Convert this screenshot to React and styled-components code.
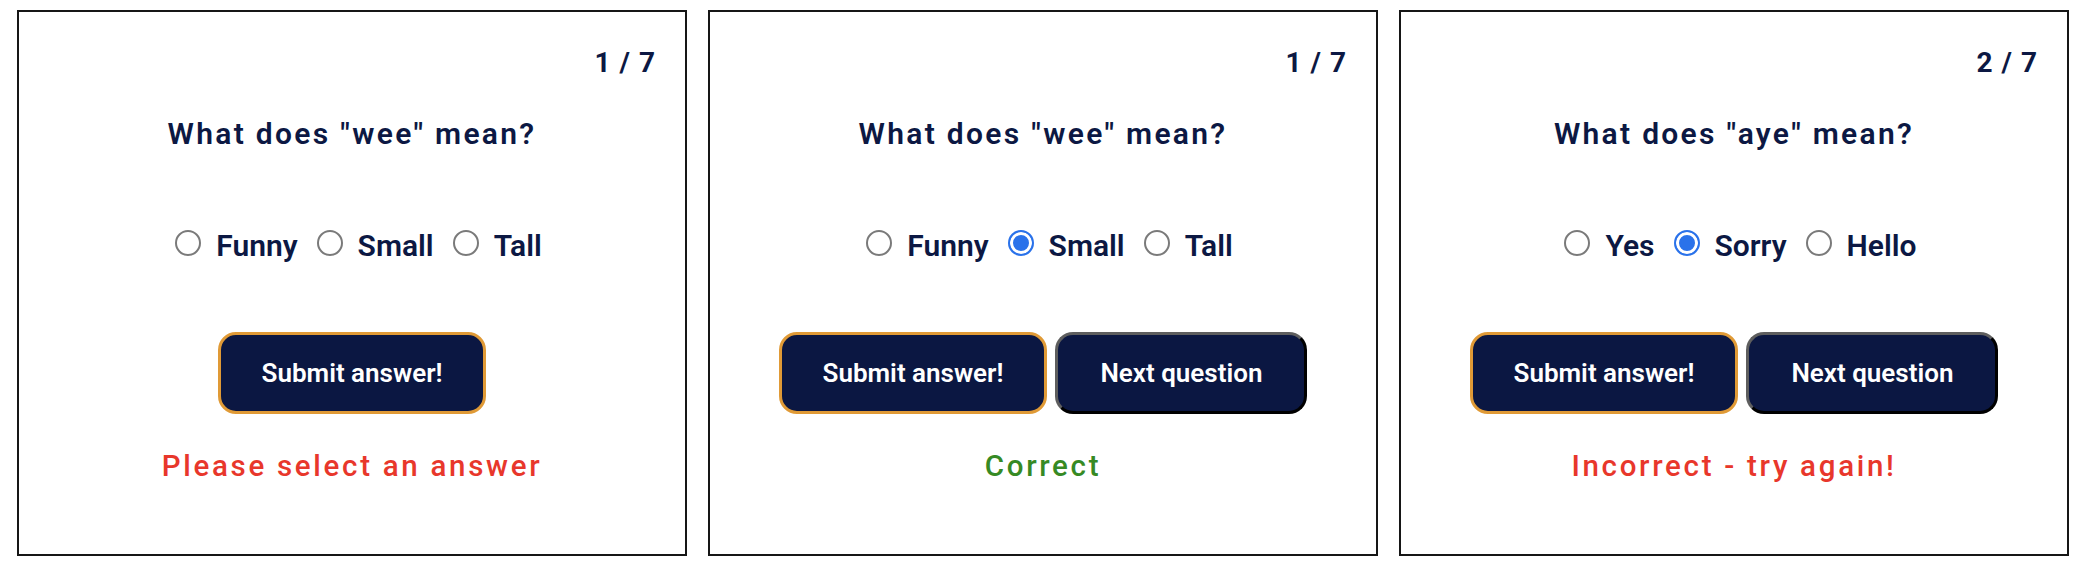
import React from 'react';
import styled, { createGlobalStyle } from 'styled-components';

const GlobalStyle = createGlobalStyle`
  html, body {
    margin: 0;
    padding: 0;
    background: #ffffff;
  }
  body {
    font-family: Roboto, "Liberation Sans", Arial, sans-serif;
  }
`;

const NAVY = '#0c1843';

const Page = styled.div`
  display: flex;
  gap: 21px;
  padding: 10px 0 0 17px;
`;

const Card = styled.div`
  box-sizing: border-box;
  width: 670px;
  height: 546px;
  border: 2px solid #161616;
  display: flex;
  flex-direction: column;
  align-items: center;
  padding-top: 37px;
`;

const Counter = styled.div`
  align-self: flex-end;
  margin-right: 29px;
  font-size: 28px;
  line-height: 1;
  font-weight: 700;
  letter-spacing: 1px;
  color: ${NAVY};
`;

const Question = styled.h2`
  margin: 42px 0 0;
  font-size: 30px;
  line-height: 1;
  font-weight: 600;
  letter-spacing: 2.3px;
  color: ${NAVY};
`;

const Options = styled.div`
  display: flex;
  align-items: center;
  margin-top: 81px;
  padding-left: 13px;
`;

const Option = styled.label`
  display: flex;
  align-items: center;
  gap: 15px;
  margin-right: 19px;
  font-size: 30px;
  line-height: 1;
  font-weight: 600;
  color: ${NAVY};

  &:last-child {
    margin-right: 0;
  }
`;

const Radio = styled.input`
  appearance: none;
  box-sizing: border-box;
  width: 26px;
  height: 26px;
  margin: 0 0 5px;
  border-radius: 50%;
  border: 2px solid #7a7a7a;
  background: #ffffff;

  &:checked {
    border-color: #2a72ea;
    background: #2a72ea;
    box-shadow: inset 0 0 0 3px #ffffff;
  }
`;

const Actions = styled.div`
  display: flex;
  gap: 8px;
  margin-top: 71px;
`;

const Button = styled.button`
  box-sizing: border-box;
  height: 82px;
  padding: 0 ${(p) => (p.$next ? 42 : 41)}px;
  border-radius: 18px;
  border: 3px solid;
  border-color: ${(p) => (p.$next ? '#5e5e5e #000000 #000000 #5e5e5e' : '#e09a36')};
  background: #0b1742;
  color: #ffffff;
  font-family: Roboto, "Liberation Sans", Arial, sans-serif;
  font-size: 26px;
  line-height: 1;
  font-weight: 600;
`;

const Message = styled.p`
  margin: 38px 0 0;
  font-size: 29.5px;
  line-height: 1;
  font-weight: 500;
  letter-spacing: 2.7px;
  color: ${(p) => (p.$ok ? '#368a24' : '#e8372b')};
`;

const cards = [
  {
    id: 'q1a',
    counter: '1 / 7',
    word: 'wee',
    options: ['Funny', 'Small', 'Tall'],
    selected: null,
    showNext: false,
    message: 'Please select an answer',
    ok: false,
  },
  {
    id: 'q1b',
    counter: '1 / 7',
    word: 'wee',
    options: ['Funny', 'Small', 'Tall'],
    selected: 'Small',
    showNext: true,
    message: 'Correct',
    ok: true,
  },
  {
    id: 'q2',
    counter: '2 / 7',
    word: 'aye',
    options: ['Yes', 'Sorry', 'Hello'],
    selected: 'Sorry',
    showNext: true,
    message: 'Incorrect - try again!',
    ok: false,
  },
];

const QuizCard = ({ card }) => (
  <Card>
    <Counter>{card.counter}</Counter>
    <Question>What does "{card.word}" mean?</Question>
    <Options>
      {card.options.map((opt) => (
        <Option key={opt}>
          <Radio
            type="radio"
            name={card.id}
            value={opt}
            defaultChecked={card.selected === opt}
          />
          {opt}
        </Option>
      ))}
    </Options>
    <Actions>
      <Button>Submit answer!</Button>
      {card.showNext && <Button $next>Next question</Button>}
    </Actions>
    <Message $ok={card.ok}>{card.message}</Message>
  </Card>
);

export default function App() {
  return (
    <>
      <GlobalStyle />
      <Page>
        {cards.map((c) => (
          <QuizCard key={c.id} card={c} />
        ))}
      </Page>
    </>
  );
}
